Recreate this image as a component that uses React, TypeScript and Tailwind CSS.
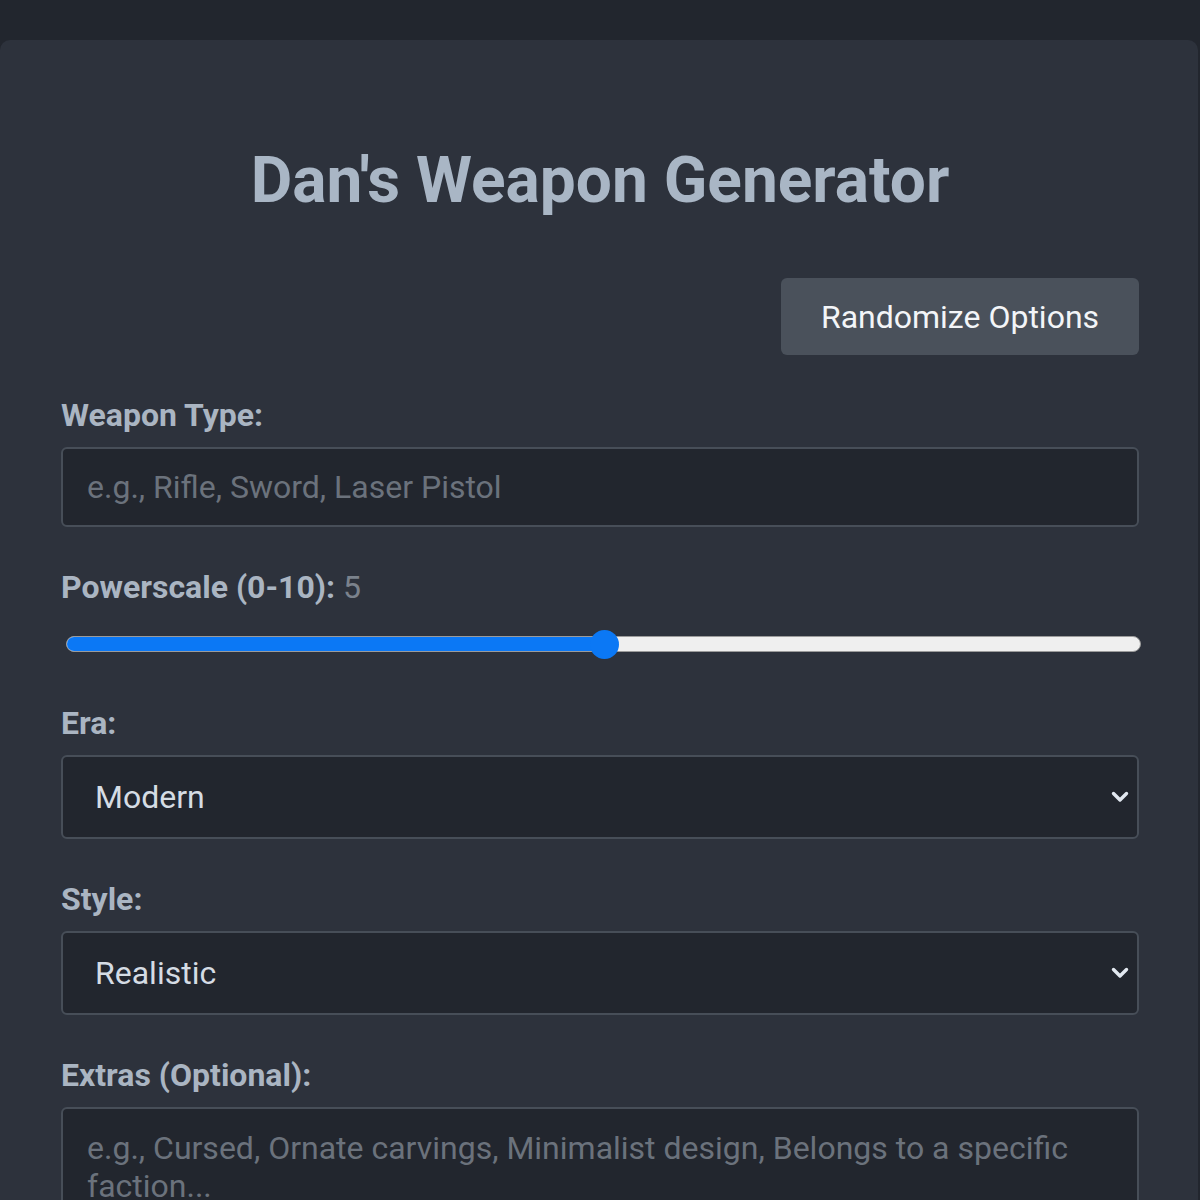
import React from "react";

function Chevron() {
  return (
    <svg width="18" height="12" viewBox="0 0 18 12" className="pointer-events-none absolute right-[10px] top-1/2 -translate-y-1/2">
      <path d="M2.5 2.5 L9 9 L15.5 2.5" fill="none" stroke="#e2e8f0" strokeWidth="3.4" strokeLinecap="round" strokeLinejoin="round" />
    </svg>
  );
}

export default function App() {
  return (
    <div className="min-h-[1200px] bg-[#22262e] pt-[40px] overflow-hidden" style={{ fontFamily: "Roboto, 'Noto Sans', sans-serif" }}>
      <div className="w-[1198px] rounded-[10px] bg-[#2d323c] pl-[61px] pr-[59px] pt-[102px] pb-[60px]">
        <h1 className="text-center text-[64px] leading-[77px] font-bold text-[#a9b6c5]">Dan's Weapon Generator</h1>

        <div className="mt-[59px] flex justify-end">
          <button className="h-[77px] w-[358px] rounded-[6px] bg-[#4a515b] text-[32px] leading-[36px] text-[#f3f5f8]">Randomize Options</button>
        </div>

        <div className="mt-[42px]">
          <label className="block text-[32px] leading-[36px] font-bold text-[#aab5c2]">Weapon Type:</label>
          <input
            className="mt-[14px] block h-[80px] w-full rounded-[6px] border-2 border-[#474e58] bg-[#22262e] px-[24px] text-[32px] text-[#d5dce4] outline-none placeholder:text-[#6b727c]"
            placeholder="e.g., Rifle, Sword, Laser Pistol"
          />
        </div>

        <div className="mt-[42px]">
          <label className="block text-[32px] leading-[36px] font-bold text-[#aab5c2]">
            Powerscale (0-10): <span className="font-normal text-[#7b828c]">5</span>
          </label>
          <div className="relative mt-[14px] h-[44px]">
            <div className="absolute left-[5px] right-[-2px] top-[17px] flex h-[16px] overflow-hidden rounded-full border border-[#9b9b9b] bg-[#efefef]">
              <div className="h-full w-[538px] bg-[#0b78f5]" />
            </div>
            <div className="absolute left-[529px] top-[11px] h-[29px] w-[29px] rounded-full bg-[#0b78f5]" />
          </div>
        </div>

        <div className="mt-[42px]">
          <label className="block text-[32px] leading-[36px] font-bold text-[#aab5c2]">Era:</label>
          <div className="relative mt-[14px]">
            <select className="block h-[84px] w-full appearance-none rounded-[6px] border-2 border-[#474e58] bg-[#22262e] px-[32px] text-[32px] text-[#d5dce4] outline-none">
              <option>Modern</option>
            </select>
            <Chevron />
          </div>
        </div>

        <div className="mt-[42px]">
          <label className="block text-[32px] leading-[36px] font-bold text-[#aab5c2]">Style:</label>
          <div className="relative mt-[14px]">
            <select className="block h-[84px] w-full appearance-none rounded-[6px] border-2 border-[#474e58] bg-[#22262e] px-[32px] text-[32px] text-[#d5dce4] outline-none">
              <option>Realistic</option>
            </select>
            <Chevron />
          </div>
        </div>

        <div className="mt-[42px]">
          <label className="block text-[32px] leading-[36px] font-bold text-[#aab5c2]">Extras (Optional):</label>
          <textarea
            className="mt-[14px] block h-[180px] w-full resize-none rounded-[6px] border-2 border-[#474e58] bg-[#22262e] px-[24px] pt-[20px] text-[32px] leading-[38px] text-[#d5dce4] outline-none placeholder:text-[#6b727c]"
            placeholder="e.g., Cursed, Ornate carvings, Minimalist design, Belongs to a specific faction..."
          />
        </div>
      </div>
    </div>
  );
}
